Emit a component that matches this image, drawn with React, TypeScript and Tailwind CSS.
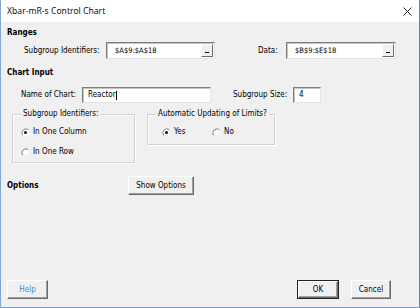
import type { ReactNode } from "react";

const ui = { fontFamily: "'DejaVu Sans Condensed', 'DejaVu Sans', Tahoma, sans-serif" };

export default function App() {
  return (
    <div className="w-[420px] h-[308px] flex flex-col bg-white border-l border-l-[#7ea8d6] border-r border-r-[#5f8b98] border-b border-b-[#6f9fd0] text-[8px] text-black" style={ui}>
      <div className="h-[22px] flex items-center justify-between pl-[6px] pr-[7px] bg-white">
        <span className="text-[8.6px] text-[#111]" style={{ fontFamily: "'Noto Sans', 'Liberation Sans', sans-serif" }}>
          Xbar-mR-s Control Chart
        </span>
        <svg width="9" height="9" viewBox="0 0 9 9">
          <path d="M0.5 0.5 L8.5 8.5 M8.5 0.5 L0.5 8.5" stroke="#222" strokeWidth="1" />
        </svg>
      </div>

      <div className="flex-1 flex flex-col bg-[#f0f0f0] px-[6px] pt-[6px] pb-[8px]">
        <p className="h-[10px] leading-[10px] font-bold">Ranges</p>

        <div className="mt-[4px] h-[17px] flex items-center">
          <span className="ml-[17px] w-[82px]">Subgroup Identifiers:</span>
          <RangeBox value="$A$9:$A$18" width="w-[109px]" />
          <span className="ml-[43px] w-[28px]">Data:</span>
          <RangeBox value="$B$9:$E$18" width="w-[110px]" />
        </div>

        <p className="mt-[9px] h-[10px] leading-[10px] font-bold">Chart Input</p>

        <div className="mt-[9px] h-[16px] flex items-center">
          <span className="ml-[14px] w-[61px]">Name of Chart:</span>
          <TextBox width="w-[129px]">
            <span className="pl-[5px]">Reactor</span>
            <span className="w-px h-[9px] bg-black" />
          </TextBox>
          <span className="ml-[22px] w-[60px]">Subgroup Size:</span>
          <TextBox width="w-[28px]">
            <span className="pl-[5px]">4</span>
          </TextBox>
        </div>

        <div className="mt-[11px] flex items-start">
          <GroupBox title="Subgroup Identifiers:" className="ml-[5px] w-[123px] h-[49px]">
            <div className="pl-[8px] pt-[12px] flex flex-col gap-[10px]">
              <Radio label="In One Column" checked />
              <Radio label="In One Row" />
            </div>
          </GroupBox>
          <GroupBox title="Automatic Updating of Limits?" className="ml-[12px] w-[128px] h-[31px]">
            <div className="pl-[14px] pt-[12px] flex items-center">
              <div className="w-[50px]">
                <Radio label="Yes" checked />
              </div>
              <Radio label="No" />
            </div>
          </GroupBox>
        </div>

        <div className="mt-[13px] h-[19px] flex items-center">
          <span className="w-[121px] font-bold">Options</span>
          <Button className="w-[66px]">Show Options</Button>
        </div>

        <div className="flex-1" />

        <div className="h-[19px] flex items-center">
          <Button className="w-[41px] text-[#3a8ee6]">Help</Button>
          <div className="flex-1" />
          <Button className="w-[42px]" primary>
            OK
          </Button>
          <Button className="ml-[12px] w-[40px]">Cancel</Button>
          <div className="w-[22px]" />
        </div>
      </div>
    </div>
  );
}

function TextBox({ width, children }: { width: string; children?: ReactNode }) {
  return (
    <div
      className={`${width} h-full flex items-center bg-white border border-t-[#7d7d7d] border-l-[#7d7d7d] border-b-[#e4e4e4] border-r-[#e4e4e4] shadow-[inset_1px_1px_0_#c4c4c4]`}
    >
      {children}
    </div>
  );
}

function RangeBox({ value, width }: { value: string; width: string }) {
  return (
    <TextBox width={width}>
      <span className="flex-1 pl-[8px] text-[7.5px]">{value}</span>
      <div className="mr-[1px] w-[12px] h-[13px] flex items-end justify-center pb-[3px] bg-[#f0f0f0] border border-t-white border-l-white border-b-[#6a6a6a] border-r-[#6a6a6a]">
        <span className="w-[4px] h-px bg-black" />
      </div>
    </TextBox>
  );
}

function GroupBox({ title, className, children }: { title: string; className: string; children: ReactNode }) {
  return (
    <div className={`${className} relative border border-[#d2d2d2] shadow-[inset_1px_1px_0_#ffffff,1px_1px_0_#ffffff]`}>
      <span className="absolute left-[8px] -top-[6px] px-[2px] leading-[10px] bg-[#f0f0f0]">{title}</span>
      {children}
    </div>
  );
}

function Radio({ label, checked }: { label: string; checked?: boolean }) {
  return (
    <div className="flex items-center gap-[3px] h-[10px]">
      <svg width="9" height="9" viewBox="0 0 9 9">
        <circle cx="4.5" cy="4.5" r="4" fill="#fff" />
        <path d="M7.3 1.7 A4 4 0 0 0 1.7 7.3" fill="none" stroke="#7a7a7a" strokeWidth="1" />
        <path d="M1.7 7.3 A4 4 0 0 0 7.3 1.7" fill="none" stroke="#e8e8e8" strokeWidth="1" />
        {checked && <circle cx="4.5" cy="4.5" r="1.5" fill="#111" />}
      </svg>
      <span>{label}</span>
    </div>
  );
}

function Button({ children, className, primary }: { children: ReactNode; className: string; primary?: boolean }) {
  return (
    <div className={`${className} h-[19px] ${primary ? "border border-[#222]" : ""}`}>
      <div className="h-full flex items-center justify-center bg-[#f0f0f0] border border-t-white border-l-white border-b-[#696969] border-r-[#696969] shadow-[inset_-1px_-1px_0_#a0a0a0]">
        {children}
      </div>
    </div>
  );
}
